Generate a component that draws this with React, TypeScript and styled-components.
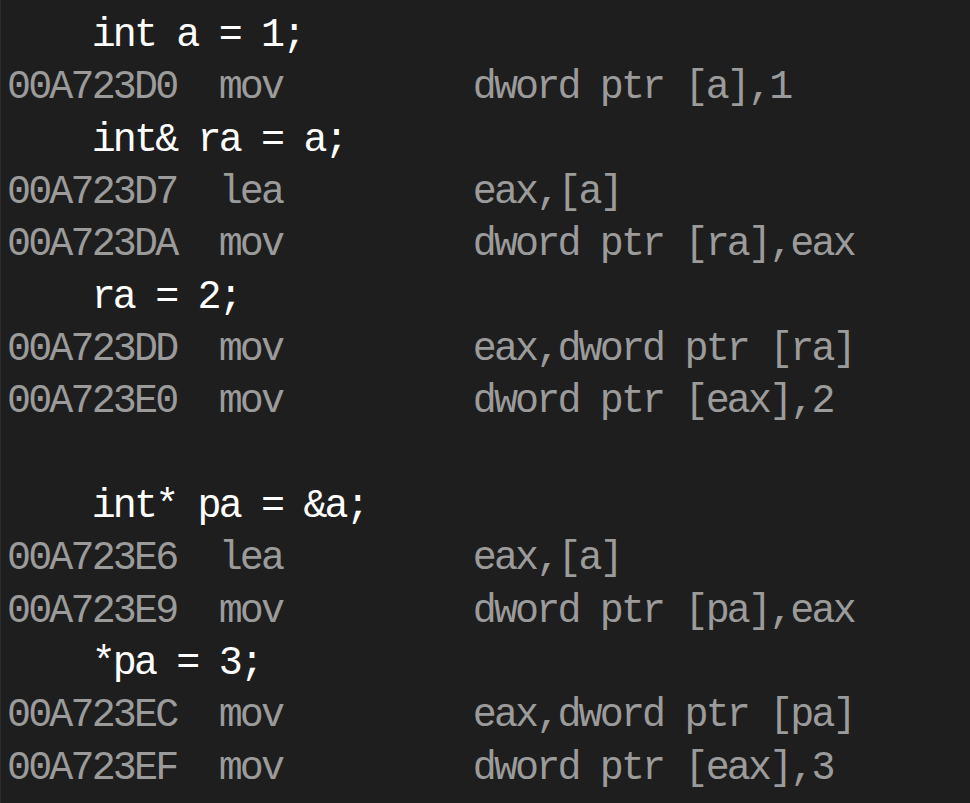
import React from "react";
import styled, { createGlobalStyle } from "styled-components";

const CELL = 21.17;
const FONT = 40;

const Global = createGlobalStyle`
  html, body {
    margin: 0;
    padding: 0;
    background: #1e1e1e;
  }
  body {
    width: 970px;
    height: 803px;
    overflow: hidden;
  }
`;

const CodeView = styled.div`
  box-sizing: border-box;
  width: 970px;
  height: 803px;
  overflow: hidden;
  background: #1e1e1e;
  border-left: 1px solid #2c2c2c;
  padding: 10px 0 0 6px;
  font-family: "Liberation Mono", "DejaVu Sans Mono", monospace;
  font-size: ${FONT}px;
  letter-spacing: ${CELL - FONT * 0.6}px;
  line-height: 52.35px;
  white-space: pre;
`;

const SourceLine = styled.div`
  height: 52.35px;
  color: #ffffff;
  padding-left: ${CELL * 4}px;
`;

const AsmLine = styled.div`
  height: 52.35px;
  display: flex;
  color: #9b9b9b;
`;

const Cell = styled.span<{ $cols?: number }>`
  display: inline-block;
  width: ${(p) => (p.$cols ? `${p.$cols * CELL}px` : "auto")};
  flex: none;
`;

const BlankLine = styled.div`
  height: 52.35px;
`;

type Row =
  | { kind: "src"; text: string }
  | { kind: "asm"; addr: string; op: string; args: string }
  | { kind: "blank" };

const rows: Row[] = [
  { kind: "src", text: "int a = 1;" },
  { kind: "asm", addr: "00A723D0", op: "mov", args: "dword ptr [a],1" },
  { kind: "src", text: "int& ra = a;" },
  { kind: "asm", addr: "00A723D7", op: "lea", args: "eax,[a]" },
  { kind: "asm", addr: "00A723DA", op: "mov", args: "dword ptr [ra],eax" },
  { kind: "src", text: "ra = 2;" },
  { kind: "asm", addr: "00A723DD", op: "mov", args: "eax,dword ptr [ra]" },
  { kind: "asm", addr: "00A723E0", op: "mov", args: "dword ptr [eax],2" },
  { kind: "blank" },
  { kind: "src", text: "int* pa = &a;" },
  { kind: "asm", addr: "00A723E6", op: "lea", args: "eax,[a]" },
  { kind: "asm", addr: "00A723E9", op: "mov", args: "dword ptr [pa],eax" },
  { kind: "src", text: "*pa = 3;" },
  { kind: "asm", addr: "00A723EC", op: "mov", args: "eax,dword ptr [pa]" },
  { kind: "asm", addr: "00A723EF", op: "mov", args: "dword ptr [eax],3" },
];

export default function App() {
  return (
    <>
      <Global />
      <CodeView>
        {rows.map((r, i) => {
          if (r.kind === "src") return <SourceLine key={i}>{r.text}</SourceLine>;
          if (r.kind === "blank") return <BlankLine key={i} />;
          return (
            <AsmLine key={i}>
              <Cell $cols={10}>{r.addr}</Cell>
              <Cell $cols={12}>{r.op}</Cell>
              <Cell>{r.args}</Cell>
            </AsmLine>
          );
        })}
      </CodeView>
    </>
  );
}
